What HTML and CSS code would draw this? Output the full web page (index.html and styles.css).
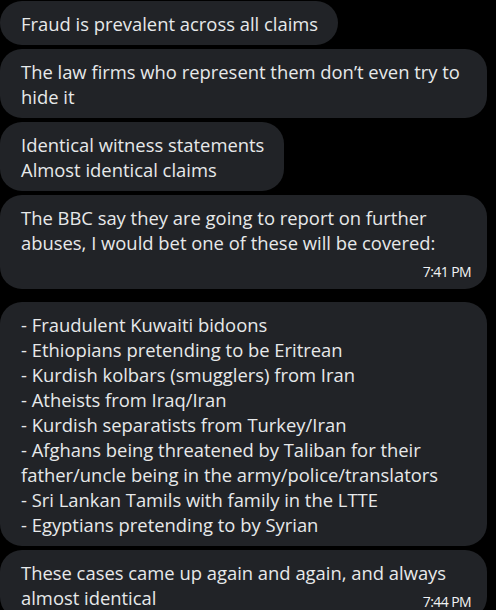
FILE: index.html
```html
<!DOCTYPE html>
<html lang="en">
<head>
<meta charset="utf-8">
<title>Messages</title>
<link rel="stylesheet" href="styles.css">
</head>
<body>
<main class="thread">
  <div class="group">
    <div class="bubble">Fraud is prevalent across all claims</div>
    <div class="bubble">The law firms who represent them don’t even try to hide it</div>
    <div class="bubble">Identical witness statements<br>Almost identical claims</div>
    <div class="bubble">The BBC say they are going to report on further abuses, I would bet one of these will be covered:<span class="time">7:41 PM</span></div>
  </div>
  <div class="group">
    <div class="bubble">- Fraudulent Kuwaiti bidoons<br>- Ethiopians pretending to be Eritrean<br>- Kurdish kolbars (smugglers) from Iran<br>- Atheists from Iraq/Iran<br>- Kurdish separatists from Turkey/Iran<br>- Afghans being threatened by Taliban for their father/uncle being in the army/police/translators<br>- Sri Lankan Tamils with family in the LTTE<br>- Egyptians pretending to by Syrian</div>
    <div class="bubble">These cases came up again and again, and always almost identical<span class="time">7:44 PM</span></div>
  </div>
</main>
</body>
</html>
```
FILE: styles.css
```css
html, body {
  margin: 0;
  padding: 0;
  background: #000;
}
body {
  width: 496px;
  height: 610px;
  overflow: hidden;
  font-family: "Open Sans", "Noto Sans", sans-serif;
  color: #e7e9ea;
}
.thread {
  display: flex;
  flex-direction: column;
  gap: 13px;
  padding-top: 1px;
}
.group {
  display: flex;
  flex-direction: column;
  align-items: flex-start;
  gap: 4px;
}
.bubble {
  display: flow-root;
  box-sizing: border-box;
  max-width: 487px;
  background: #212327;
  border-radius: 22px;
  padding: 9.5px 20px 9.5px 21px;
  font-size: 18.4px;
  line-height: 25px;
}
.time {
  float: right;
  margin: 8px -4px 0 12px;
  font-size: 14px;
  line-height: 17px;
  letter-spacing: -0.6px;
  color: #f2f3f4;
}
```
